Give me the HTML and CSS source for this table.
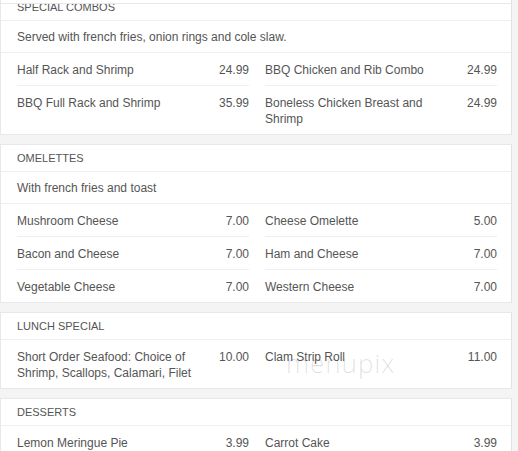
FILE: index.html
```html
<!DOCTYPE html>
<html>
<head>
<meta charset="utf-8">
<link rel="stylesheet" href="styles.css">
</head>
<body>
<div class="topline"></div>
<div class="menu">
  <section class="sec">
    <div class="sec-head">SPECIAL COMBOS</div>
    <div class="sec-desc">Served with french fries, onion rings and cole slaw.</div>
    <div class="items">
      <div class="col">
        <div class="item"><span class="name">Half Rack and Shrimp</span><span class="price">24.99</span></div>
        <div class="item"><span class="name">BBQ Full Rack and Shrimp</span><span class="price">35.99</span></div>
      </div>
      <div class="col">
        <div class="item"><span class="name">BBQ Chicken and Rib Combo</span><span class="price">24.99</span></div>
        <div class="item"><span class="name">Boneless Chicken Breast and Shrimp</span><span class="price">24.99</span></div>
      </div>
    </div>
  </section>
  <section class="sec">
    <div class="sec-head">OMELETTES</div>
    <div class="sec-desc">With french fries and toast</div>
    <div class="items">
      <div class="col">
        <div class="item"><span class="name">Mushroom Cheese</span><span class="price">7.00</span></div>
        <div class="item"><span class="name">Bacon and Cheese</span><span class="price">7.00</span></div>
        <div class="item"><span class="name">Vegetable Cheese</span><span class="price">7.00</span></div>
      </div>
      <div class="col">
        <div class="item"><span class="name">Cheese Omelette</span><span class="price">5.00</span></div>
        <div class="item"><span class="name">Ham and Cheese</span><span class="price">7.00</span></div>
        <div class="item"><span class="name">Western Cheese</span><span class="price">7.00</span></div>
      </div>
    </div>
  </section>
  <section class="sec">
    <div class="sec-head">LUNCH SPECIAL</div>
    <div class="items">
      <div class="col">
        <div class="item"><span class="name">Short Order Seafood: Choice of Shrimp, Scallops, Calamari, Filet</span><span class="price">10.00</span></div>
      </div>
      <div class="col">
        <div class="item"><span class="name">Clam Strip Roll</span><span class="price">11.00</span></div>
      </div>
    </div>
    <div class="watermark">menupix</div>
  </section>
  <section class="sec">
    <div class="sec-head">DESSERTS</div>
    <div class="items">
      <div class="col">
        <div class="item"><span class="name">Lemon Meringue Pie</span><span class="price">3.99</span></div>
      </div>
      <div class="col">
        <div class="item"><span class="name">Carrot Cake</span><span class="price">3.99</span></div>
      </div>
    </div>
  </section>
</div>
</body>
</html>
```
FILE: styles.css
```css
html, body {
  margin: 0;
  padding: 0;
  background: #f4f4f5;
  font-family: "Liberation Sans", Arial, sans-serif;
  color: #555;
  overflow: hidden;
}
.topline {
  position: fixed;
  top: 3px;
  left: 0;
  width: 512px;
  height: 1px;
  background: #e8e8ea;
  z-index: 2;
}
.menu {
  width: 512px;
  margin-top: -7px;
}
.sec {
  position: relative;
  background: #fff;
  border: 1px solid #e8e8ea;
  border-right-color: #e2e2e4;
  margin-bottom: 9px;
  box-sizing: border-box;
}
.sec-head {
  font-size: 11px;
  line-height: 14px;
  padding: 6px 16px 6px;
  border-bottom: 1px solid #efeff0;
  color: #555;
}
.sec-desc {
  font-size: 12px;
  line-height: 16px;
  padding: 8px 16px 7px;
  border-bottom: 1px solid #efeff0;
}
.items {
  display: grid;
  grid-template-columns: 232px 232px;
  column-gap: 16px;
  padding: 0 16px;
}
.item {
  display: flex;
  justify-content: space-between;
  gap: 24px;
  font-size: 12px;
  line-height: 16px;
  padding: 9px 0 7px;
  border-bottom: 1px solid #eeeef0;
}
.col .item:last-child {
  border-bottom: none;
}
.name {
  flex: 1;
}
.price {
  white-space: nowrap;
}
.watermark {
  position: absolute;
  left: 285px;
  top: 32px;
  font-family: "Open Sans", sans-serif;
  font-weight: 300;
  font-size: 26px;
  letter-spacing: 1px;
  color: rgba(0, 0, 0, 0.13);
  pointer-events: none;
}
```
